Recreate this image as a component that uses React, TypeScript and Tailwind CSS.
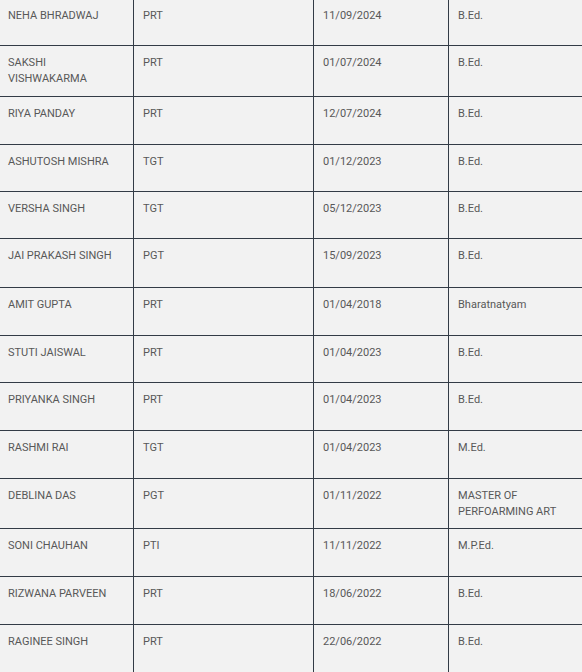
import React from "react";

type Row = { name: string; post: string; date: string; qual: string; h: string };

const rows: Row[] = [
  { name: "NEHA BHRADWAJ", post: "PRT", date: "11/09/2024", qual: "B.Ed.", h: "h-[47px]" },
  { name: "SAKSHI VISHWAKARMA", post: "PRT", date: "01/07/2024", qual: "B.Ed.", h: "h-[51px]" },
  { name: "RIYA PANDAY", post: "PRT", date: "12/07/2024", qual: "B.Ed.", h: "h-[48px]" },
  { name: "ASHUTOSH MISHRA", post: "TGT", date: "01/12/2023", qual: "B.Ed.", h: "h-[47px]" },
  { name: "VERSHA SINGH", post: "TGT", date: "05/12/2023", qual: "B.Ed.", h: "h-[47px]" },
  { name: "JAI PRAKASH SINGH", post: "PGT", date: "15/09/2023", qual: "B.Ed.", h: "h-[49px]" },
  { name: "AMIT GUPTA", post: "PRT", date: "01/04/2018", qual: "Bharatnatyam", h: "h-[48px]" },
  { name: "STUTI JAISWAL", post: "PRT", date: "01/04/2023", qual: "B.Ed.", h: "h-[47px]" },
  { name: "PRIYANKA SINGH", post: "PRT", date: "01/04/2023", qual: "B.Ed.", h: "h-[48px]" },
  { name: "RASHMI RAI", post: "TGT", date: "01/04/2023", qual: "M.Ed.", h: "h-[48px]" },
  { name: "DEBLINA DAS", post: "PGT", date: "01/11/2022", qual: "MASTER OF PERFOARMING ART", h: "h-[50px]" },
  { name: "SONI CHAUHAN", post: "PTI", date: "11/11/2022", qual: "M.P.Ed.", h: "h-[48px]" },
  { name: "RIZWANA PARVEEN", post: "PRT", date: "18/06/2022", qual: "B.Ed.", h: "h-[48px]" },
  { name: "RAGINEE SINGH", post: "PRT", date: "22/06/2022", qual: "B.Ed.", h: "h-[48px]" },
];

export default function App() {
  return (
    <div
      className="w-[582px] h-[672px] overflow-hidden bg-[#f2f2f2] text-[#585858] text-[11px] leading-[16px]"
      style={{ fontFamily: "Roboto, 'Liberation Sans', sans-serif" }}
    >
      <div className="-mt-[1px] flex flex-col">
        {rows.map((r, i) => (
          <div key={i} className={`flex border-b border-[#333b46] ${r.h}`}>
            <div className="w-[134px] shrink-0 border-r border-[#333b46] pl-[8px] pr-[8px] pt-[9px]">
              {r.name}
            </div>
            <div className="w-[180px] shrink-0 border-r border-[#333b46] pl-[9px] pr-[8px] pt-[9px]">
              {r.post}
            </div>
            <div className="w-[135px] shrink-0 border-r border-[#333b46] pl-[9px] pr-[8px] pt-[9px]">
              {r.date}
            </div>
            <div className="w-[133px] shrink-0 pl-[9px] pr-[8px] pt-[9px]">{r.qual}</div>
          </div>
        ))}
      </div>
    </div>
  );
}
